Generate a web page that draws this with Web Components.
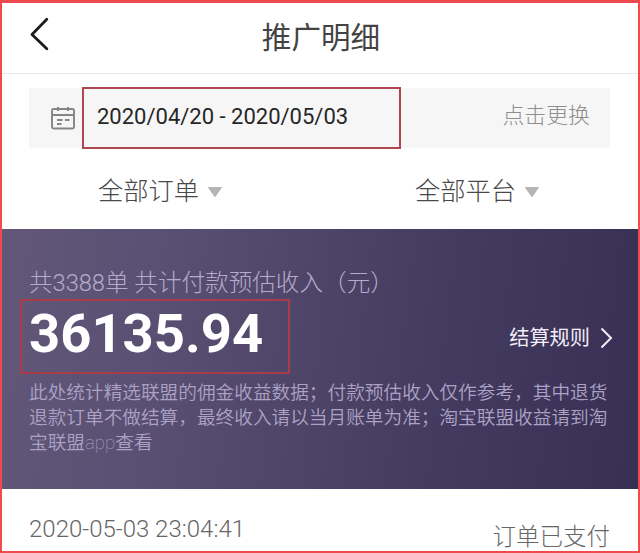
<!DOCTYPE html>
<html lang="zh-CN">
<head>
<meta charset="utf-8">
<title>推广明细</title>
<style>
body{margin:0;font-family:Roboto,"Noto Sans CJK SC",sans-serif;background:#fff}
</style>
</head>
<body>
<promo-page></promo-page>
<script>
function define(name, html){
  customElements.define(name, class extends HTMLElement{
    constructor(){
      super();
      const t=document.createElement('template');
      t.innerHTML=html;
      this.attachShadow({mode:'open'}).appendChild(t.content.cloneNode(true));
    }
  });
}
define('page-header',`<style>
:host{display:grid;grid-template-columns:80px 1fr 80px;align-items:center;height:71px;border-bottom:1px solid #e6e6e6;box-sizing:border-box;flex:none}
svg{display:block;margin-left:26px;margin-top:-8px}
h1{margin:-1px 0 0;padding-left:2px;text-align:center;font-size:29.6px;font-weight:400;line-height:40px;color:#434343;white-space:nowrap}
</style><svg width="24" height="36" viewBox="0 0 24 36" fill="none" stroke="#1c1c1c" stroke-width="2.8" stroke-linecap="round" stroke-linejoin="round"><path d="M18.8 3.3 4 18.4 18.8 32.8"/></svg><h1><slot></slot></h1>`);
define('date-range',`<style>
:host{display:flex;align-items:center;height:60px;margin:14px 28px 0 27px;background:#f6f6f6;flex:none}
svg{margin-left:21px;margin-top:-1px;flex:none}
.range{box-sizing:border-box;width:319px;height:62px;margin-left:6px;padding-left:13px;border:2px solid #ae4650;line-height:55px;font-size:22px;color:#262626;white-space:nowrap}
.change{margin:-5px 20px 0 auto;font-size:21.9px;line-height:32px;font-weight:300;color:#8e8e8e;white-space:nowrap}
</style>
<svg width="26" height="24" viewBox="0 0 26 24" fill="none" stroke="#858585" stroke-width="1.9"><rect x="2" y="3" width="22" height="19.5" rx="1.5"/><path d="M2 9h22M8 1v4M18 1v4M7 14h5.5M15 14h4.5M7 18h4.5"/></svg>
<div class="range"><slot></slot></div><div class="change"><slot name="action"></slot></div>`);
define('filter-menu',`<style>
:host{display:flex;align-items:center;gap:8px;font-size:25.3px;line-height:36px;font-weight:300;color:#484848;white-space:nowrap}
svg{display:block}
</style><span><slot></slot></span><svg width="16" height="12" viewBox="0 0 16 12"><path d="M1.6 1h12.8q1 0 .4.8L8.7 10.5q-.7.9-1.4 0L1.1 1.8Q.6 1 1.6 1z" fill="#b5b5b5"/></svg>`);
define('filter-bar',`<style>
:host{display:grid;grid-template-columns:1fr 1fr;justify-items:center;align-items:center;height:81px;padding:7px 2px 0 0;box-sizing:border-box;flex:none}
</style><slot></slot>`);
define('income-panel',`<style>
:host{display:flex;flex-direction:column;box-sizing:border-box;height:260px;padding:37px 28px 0 27px;flex:none;background:linear-gradient(97deg,#625778 0%,#595073 24%,#4b4265 53%,#40385d 76%,#383054 100%);color:#ada2c5}
.title{font-size:23.6px;line-height:34px;height:33px;font-weight:300;color:#b6abcc;white-space:nowrap}
.row{display:flex;align-items:center;justify-content:space-between;height:74px}
.amount{box-sizing:border-box;width:270px;height:75px;margin-left:-9px;padding-left:7px;border:2px solid #aa3b4b;font-size:54.4px;font-weight:700;line-height:65px;color:#fff;white-space:nowrap}
.rule{display:flex;align-items:center;gap:10px;margin:3px -3px 0 0;font-size:20.2px;line-height:30px;color:#f3eef8;white-space:nowrap}
.note{margin:8px 0 0;font-size:18.66px;line-height:25px;font-weight:350;white-space:nowrap}
</style><div class="title"><slot name="title"></slot></div>
<div class="row"><div class="amount"><slot name="amount"></slot></div><div class="rule"><slot name="rule"></slot><svg width="13" height="22" viewBox="0 0 13 22" fill="none" stroke="#f3eef8" stroke-width="2"><path d="M1.5 1.5 11 11 1.5 20.5"/></svg></div></div>
<p class="note"><slot></slot></p>`);
define('order-row',`<style>
:host{display:flex;justify-content:space-between;align-items:flex-start;padding:23px 28px 0 27px;font-weight:300;color:#666;white-space:nowrap}
.time{font-size:24px;line-height:34px}
.state{font-size:23.5px;line-height:34px;margin-top:8px}
</style><span class="time"><slot></slot></span><span class="state"><slot name="state"></slot></span>`);
define('promo-page',`<style>
:host{display:flex;flex-direction:column;box-sizing:border-box;width:640px;height:553px;overflow:hidden;border:2px solid #ee4b4e;border-top-width:3px;background:#fff}
.thin{font-weight:100}
</style>
<page-header>推广明细</page-header>
<date-range>2020/04/20 - 2020/05/03<span slot="action">点击更换</span></date-range>
<filter-bar><filter-menu>全部订单</filter-menu><filter-menu>全部平台</filter-menu></filter-bar>
<income-panel><span slot="title">共3388单 共计付款预估收入（元）</span><span slot="amount">36135.94</span><span slot="rule">结算规则</span>此处统计精选联盟的佣金收益数据；付款预估收入仅作参考，其中退货<br>退款订单不做结算，最终收入请以当月账单为准；淘宝联盟收益请到淘<br>宝联盟<span class="thin">app</span>查看</income-panel>
<order-row>2020-05-03 23:04:41<span slot="state">订单已支付</span></order-row>`);
</script>
</body>
</html>
